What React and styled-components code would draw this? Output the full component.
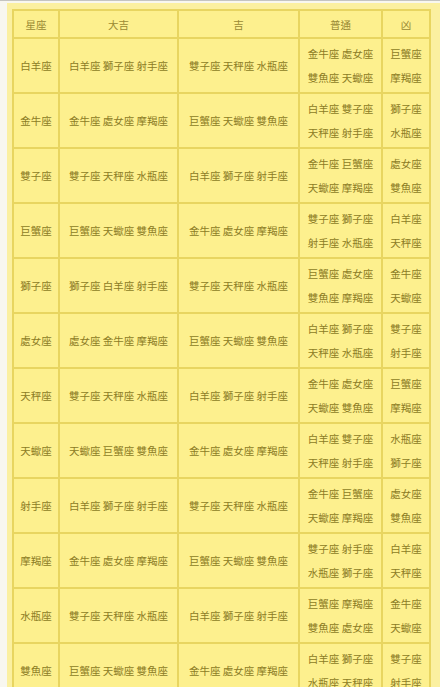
import React from "react";
import styled, { createGlobalStyle } from "styled-components";

const GlobalStyle = createGlobalStyle`
  html, body {
    margin: 0;
    padding: 0;
    background: #f8f7ef;
    overflow: hidden;
  }
  body {
    font-family: "Noto Sans CJK TC", "Noto Sans CJK SC", "Noto Sans", sans-serif;
  }
`;

const Page = styled.div`
  border-top: 1px solid #c4c4c0;
  padding-top: 2px;
`;

const Panel = styled.div`
  margin-left: 7px;
  padding: 6px 9px 0 5px;
  background: #fbf0a0;
`;

const Table = styled.div`
  display: grid;
  grid-template-columns: 44px 117px 119px 81px 46px;
  grid-template-rows: 26px;
  grid-auto-rows: 53px;
  gap: 2px;
  padding: 2px;
  background: #e8d560;
  width: max-content;
`;

const HeadCell = styled.div`
  display: flex;
  align-items: center;
  justify-content: center;
  background: #fdf08e;
  color: #9a8a34;
  font-size: 10.5px;
`;

const Cell = styled.div`
  display: flex;
  flex-direction: column;
  align-items: center;
  justify-content: center;
  background: #fdf08e;
  color: #8c7c25;
  font-size: 10.5px;
  line-height: ${(p) => (p.$split ? "24px" : "16px")};
  white-space: nowrap;
`;

const header = ["星座", "大吉", "吉", "普通", "凶"];

const rows = [
  ["白羊座", "白羊座 獅子座 射手座", "雙子座 天秤座 水瓶座", ["金牛座 處女座", "雙魚座 天蠍座"], ["巨蟹座", "摩羯座"]],
  ["金牛座", "金牛座 處女座 摩羯座", "巨蟹座 天蠍座 雙魚座", ["白羊座 雙子座", "天秤座 射手座"], ["獅子座", "水瓶座"]],
  ["雙子座", "雙子座 天秤座 水瓶座", "白羊座 獅子座 射手座", ["金牛座 巨蟹座", "天蠍座 摩羯座"], ["處女座", "雙魚座"]],
  ["巨蟹座", "巨蟹座 天蠍座 雙魚座", "金牛座 處女座 摩羯座", ["雙子座 獅子座", "射手座 水瓶座"], ["白羊座", "天秤座"]],
  ["獅子座", "獅子座 白羊座 射手座", "雙子座 天秤座 水瓶座", ["巨蟹座 處女座", "雙魚座 摩羯座"], ["金牛座", "天蠍座"]],
  ["處女座", "處女座 金牛座 摩羯座", "巨蟹座 天蠍座 雙魚座", ["白羊座 獅子座", "天秤座 水瓶座"], ["雙子座", "射手座"]],
  ["天秤座", "雙子座 天秤座 水瓶座", "白羊座 獅子座 射手座", ["金牛座 處女座", "天蠍座 雙魚座"], ["巨蟹座", "摩羯座"]],
  ["天蠍座", "天蠍座 巨蟹座 雙魚座", "金牛座 處女座 摩羯座", ["白羊座 雙子座", "天秤座 射手座"], ["水瓶座", "獅子座"]],
  ["射手座", "白羊座 獅子座 射手座", "雙子座 天秤座 水瓶座", ["金牛座 巨蟹座", "天蠍座 摩羯座"], ["處女座", "雙魚座"]],
  ["摩羯座", "金牛座 處女座 摩羯座", "巨蟹座 天蠍座 雙魚座", ["雙子座 射手座", "水瓶座 獅子座"], ["白羊座", "天秤座"]],
  ["水瓶座", "雙子座 天秤座 水瓶座", "白羊座 獅子座 射手座", ["巨蟹座 摩羯座", "雙魚座 處女座"], ["金牛座", "天蠍座"]],
  ["雙魚座", "巨蟹座 天蠍座 雙魚座", "金牛座 處女座 摩羯座", ["白羊座 獅子座", "水瓶座 天秤座"], ["雙子座", "射手座"]],
];

const App = () => {
  return (
    <>
      <GlobalStyle />
      <Page>
        <Panel>
          <Table>
            {header.map((h) => (
              <HeadCell key={h}>{h}</HeadCell>
            ))}
            {rows.map((row, i) =>
              row.map((c, j) =>
                Array.isArray(c) ? (
                  <Cell key={`${i}-${j}`} $split>
                    {c.map((line) => (
                      <span key={line}>{line}</span>
                    ))}
                  </Cell>
                ) : (
                  <Cell key={`${i}-${j}`}>{c}</Cell>
                )
              )
            )}
          </Table>
        </Panel>
      </Page>
    </>
  );
};

export default App;
